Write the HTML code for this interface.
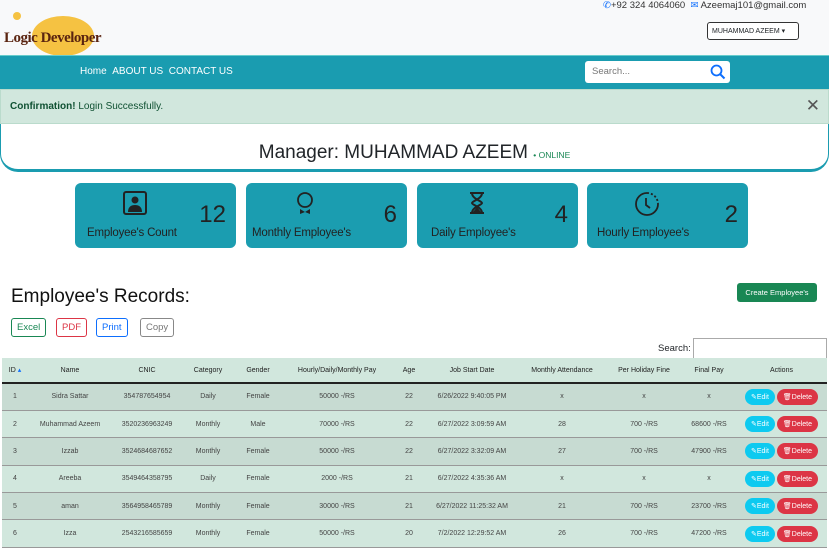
<!DOCTYPE html>
<html><head><style>
*{box-sizing:border-box;margin:0;padding:0}
body{width:829px;height:547px;overflow:hidden;background:#fff;font-family:"Liberation Sans",sans-serif;color:#212529;position:relative}
.abs{position:absolute}
.top{left:0;top:0;width:829px;height:55px;background:#f8f9fa}
.nav{left:0;top:55px;width:829px;height:34px;background:#1a9cb0;border-top:1px solid #6cc}
.alert{left:0;top:89px;width:829px;height:35px;background:#d1e7dd;border:1px solid #badbcc;font-size:10px;color:#0f5132;padding:11px 9px}
.mgr{left:0;top:124px;width:829px;height:48px;background:#fff;border-bottom:3px solid #1a9cb0;border-radius:0 0 18px 18px;border-left:1px solid #1a9cb0;border-right:1px solid #1a9cb0;text-align:center;font-size:19px;padding-top:18px}
.card{top:183px;width:161px;height:65px;background:#1b9db0;border-radius:6px}
.card .t{position:absolute;left:12px;top:44px;font-size:11.5px;color:#222;letter-spacing:-0.2px}
.card .n{position:absolute;right:10px;top:18px;font-size:24px;color:#222}
.card svg{position:absolute;top:8px}
table{position:absolute;left:2px;top:358px;width:825px;border-collapse:collapse;font-size:7px;color:#444;text-align:center}
th{height:25px;background:#d1e7dd;font-weight:normal;color:#222;border-bottom:2px solid #222}
td{height:27.4px;border-bottom:1px solid #999}
tr.o td{background:#c7dbd2}tr.e td{background:#d1e7dd}
.be{display:inline-block;background:#0dcaf0;color:#fff;border-radius:8px;padding:4px 6px;font-size:7px}
.bd{display:inline-block;background:#dc3545;color:#fff;border-radius:8px;padding:4px 6px;font-size:7px}
.ob{top:318px;height:19px;font-size:9.5px;border:1px solid;border-radius:3px;padding:3px 5px;background:#fff}
</style></head><body>
<div class="abs top"></div>
<div class="abs" style="left:13px;top:12px;width:8px;height:8px;border-radius:50%;background:#f5c242"></div>
<div class="abs" style="left:32px;top:16px;width:62px;height:40px;border-radius:50%;background:#f5c242"></div>
<div class="abs" style="left:4px;top:30px;font-family:'Liberation Serif',serif;font-weight:bold;font-size:15px;color:#5a2410;letter-spacing:-0.5px">Logic Developer</div>
<div class="abs" style="left:603px;top:0px;font-size:9.5px;color:#333"><span style="color:#0d6efd">✆</span>+92 324 4064060 &nbsp;<span style="color:#0d6efd">✉</span> Azeemaj101@gmail.com</div>
<div class="abs" style="left:707px;top:22px;width:92px;height:18px;border:1px solid #333;border-radius:3px;font-size:7px;padding:4px 4px;background:#fff">MUHAMMAD AZEEM ▾</div>
<div class="abs nav"></div>
<div class="abs" style="left:80px;top:66px;font-size:10px;color:#fff">Home &nbsp;ABOUT US &nbsp;CONTACT US</div>
<div class="abs" style="left:585px;top:61px;width:145px;height:22px;background:#fff;border-radius:3px;font-size:9.5px;color:#777;padding:5px 7px">Search...
<svg class="abs" style="right:4px;top:3px" width="16" height="16" viewBox="0 0 16 16"><circle cx="6.5" cy="6.5" r="5" fill="none" stroke="#0d6efd" stroke-width="1.8"/><path d="M10 10l4.5 4.5" stroke="#0d6efd" stroke-width="2"/></svg></div>
<div class="abs alert"><b>Confirmation!</b> Login Successfully.<span style="position:absolute;right:8px;top:6px;font-size:17px;color:#555">✕</span></div>
<div class="abs mgr">Manager: MUHAMMAD AZEEM <span style="font-size:8.5px;color:#198754">• ONLINE</span></div>

<div class="abs card" style="left:75px"><svg style="left:48px" width="24" height="24" viewBox="0 0 24 24"><rect x="1" y="1" width="22" height="22" rx="2" fill="none" stroke="#222" stroke-width="2"/><circle cx="12" cy="9" r="3.5" fill="#222"/><path d="M5 21c0-5 3-7 7-7s7 2 7 7z" fill="#222"/></svg><div class="n">12</div><div class="t">Employee's Count</div></div>
<div class="abs card" style="left:246px"><svg style="left:50px" width="18" height="26" viewBox="0 0 18 26"><circle cx="9" cy="9" r="7" fill="none" stroke="#222" stroke-width="1.8"/><path d="M4 18l5 3 5-3v5l-5-2-5 2z" fill="#222"/></svg><div class="n">6</div><div class="t" style="left:6px">Monthly Employee's</div></div>
<div class="abs card" style="left:417px"><svg style="left:51px" width="18" height="24" viewBox="0 0 18 24"><path d="M2 2h14M2 22h14M4 2c0 6 10 8 10 10s-10 4-10 10M14 2c0 6-10 8-10 10s10 4 10 10" stroke="#222" stroke-width="2" fill="none"/><path d="M5 21l4-5 4 5z" fill="#222"/></svg><div class="n">4</div><div class="t" style="left:14px">Daily Employee's</div></div>
<div class="abs card" style="left:587px"><svg style="left:47px" width="26" height="26" viewBox="0 0 26 26"><path d="M13 2a11 11 0 1 0 11 11" fill="none" stroke="#222" stroke-width="1.8"/><path d="M13 2a11 11 0 0 1 11 11" fill="none" stroke="#222" stroke-width="1.8" stroke-dasharray="2 2"/><path d="M12 7v7l4 3" fill="none" stroke="#222" stroke-width="1.8"/></svg><div class="n">2</div><div class="t" style="left:10px">Hourly Employee's</div></div>

<div class="abs" style="left:11px;top:286px;font-size:19px;color:#111">Employee's Records:</div>
<div class="abs" style="left:737px;top:283px;width:80px;height:19px;background:#198754;color:#fff;font-size:7.5px;border-radius:3px;text-align:center;padding-top:5px">Create Employee's</div>
<div class="abs ob" style="left:11px;border-color:#198754;color:#198754">Excel</div>
<div class="abs ob" style="left:56px;border-color:#dc3545;color:#dc3545">PDF</div>
<div class="abs ob" style="left:96px;border-color:#0d6efd;color:#0d6efd">Print</div>
<div class="abs ob" style="left:140px;border-color:#888;color:#777">Copy</div>
<div class="abs" style="left:658px;top:343px;font-size:9.5px">Search:</div>
<div class="abs" style="left:693px;top:338px;width:134px;height:22px;border:1px solid #aaa;background:#fff"></div>

<table>
<tr><th style="width:26px">ID <span style="color:#0d6efd">▴</span></th><th style="width:84px">Name</th><th style="width:70px">CNIC</th><th style="width:52px">Category</th><th style="width:48px">Gender</th><th style="width:110px">Hourly/Daily/Monthly Pay</th><th style="width:34px">Age</th><th style="width:92px">Job Start Date</th><th style="width:88px">Monthly Attendance</th><th style="width:76px">Per Holiday Fine</th><th style="width:54px">Final Pay</th><th>Actions</th></tr>
<tr class="o"><td>1</td><td>Sidra Sattar</td><td>354787654954</td><td>Daily</td><td>Female</td><td>50000 -/RS</td><td>22</td><td>6/26/2022 9:40:05 PM</td><td>x</td><td>x</td><td>x</td><td><span class="be">✎Edit</span> <span class="bd">🗑Delete</span></td></tr>
<tr class="e"><td>2</td><td>Muhammad Azeem</td><td>3520236963249</td><td>Monthly</td><td>Male</td><td>70000 -/RS</td><td>22</td><td>6/27/2022 3:09:59 AM</td><td>28</td><td>700 -/RS</td><td>68600 -/RS</td><td><span class="be">✎Edit</span> <span class="bd">🗑Delete</span></td></tr>
<tr class="o"><td>3</td><td>Izzab</td><td>3524684687652</td><td>Monthly</td><td>Female</td><td>50000 -/RS</td><td>22</td><td>6/27/2022 3:32:09 AM</td><td>27</td><td>700 -/RS</td><td>47900 -/RS</td><td><span class="be">✎Edit</span> <span class="bd">🗑Delete</span></td></tr>
<tr class="e"><td>4</td><td>Areeba</td><td>3549464358795</td><td>Daily</td><td>Female</td><td>2000 -/RS</td><td>21</td><td>6/27/2022 4:35:36 AM</td><td>x</td><td>x</td><td>x</td><td><span class="be">✎Edit</span> <span class="bd">🗑Delete</span></td></tr>
<tr class="o"><td>5</td><td>aman</td><td>3564958465789</td><td>Monthly</td><td>Female</td><td>30000 -/RS</td><td>21</td><td>6/27/2022 11:25:32 AM</td><td>21</td><td>700 -/RS</td><td>23700 -/RS</td><td><span class="be">✎Edit</span> <span class="bd">🗑Delete</span></td></tr>
<tr class="e"><td>6</td><td>Izza</td><td>2543216585659</td><td>Monthly</td><td>Female</td><td>50000 -/RS</td><td>20</td><td>7/2/2022 12:29:52 AM</td><td>26</td><td>700 -/RS</td><td>47200 -/RS</td><td><span class="be">✎Edit</span> <span class="bd">🗑Delete</span></td></tr>
</table>
</body></html>
